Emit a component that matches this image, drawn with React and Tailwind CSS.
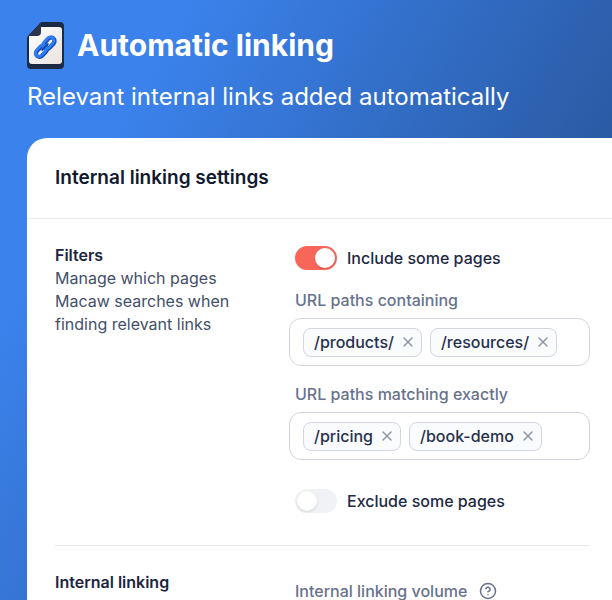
import React, { useState } from "react";
import { CircleHelp, X } from "lucide-react";

const LinkFileIcon = () => (
  <svg width="38" height="48" viewBox="0 0 38 48" aria-hidden="true">
    <defs>
      <linearGradient id="paper" x1="0" y1="0" x2="1" y2="1">
        <stop offset="0" stopColor="#ffffff" />
        <stop offset="1" stopColor="#e9e2e0" />
      </linearGradient>
    </defs>
    <path
      d="M15 1H33a4 4 0 0 1 4 4V44a4 4 0 0 1-4 4H4a4 4 0 0 1-4-4V17q0-1 1-2L13 2q1-1 2-1z"
      fill="#1d2a44"
    />
    <path
      d="M14 6H32a3 3 0 0 1 3 3V40a3 3 0 0 1-3 3H5a3 3 0 0 1-3-3V15z"
      fill="url(#paper)"
    />
    <path d="M14 2V11a4 4 0 0 1-4 4H1z" fill="#2b3550" />
    <g transform="translate(18 26) rotate(-47)" fill="none" strokeLinecap="round">
      <g stroke="#1450bd" strokeWidth="4">
        <rect x="-12" y="-3" width="13" height="7" rx="3.5" />
        <rect x="-1" y="-3" width="13" height="7" rx="3.5" />
      </g>
      <g stroke="#2f7df0" strokeWidth="3">
        <rect x="-12" y="-4" width="13" height="7" rx="3.5" />
        <rect x="-1" y="-4" width="13" height="7" rx="3.5" />
      </g>
      <path d="M-4 0H4" stroke="#1148ac" strokeWidth="2" />
    </g>
  </svg>
);

const Toggle = ({ label, checked, onChange }) => (
  <label className="flex items-center gap-2.5 text-base leading-6 font-medium text-[#1e2a45]">
    <input
      type="checkbox"
      role="switch"
      checked={checked}
      onChange={(e) => onChange(e.target.checked)}
      className="peer sr-only"
    />
    <span className="flex h-6 w-[42px] items-center rounded-full bg-[#f1f2f5] p-0.5 peer-checked:justify-end peer-checked:bg-[#f8665a]">
      <span className="size-5 rounded-full bg-white shadow"></span>
    </span>
    {label}
  </label>
);

const PathField = ({ id, label, initial }) => {
  const [paths, setPaths] = useState(initial);
  const [draft, setDraft] = useState("");

  const addPath = (e) => {
    if (e.key === "Enter" && draft.trim()) {
      setPaths([...paths, draft.trim()]);
      setDraft("");
    }
  };

  return (
    <div>
      <label
        htmlFor={id}
        className="block pl-1.5 text-base leading-6 font-medium text-[#68728c]"
      >
        {label}
      </label>
      <div className="mt-1.5 flex h-12 items-center gap-2 rounded-xl border border-[#d3d5df] px-[13px]">
        {paths.map((path) => (
          <span
            key={path}
            className="flex h-[29px] items-center gap-1.5 rounded-lg border border-[#d3d5df] bg-[#f9fbfd] pr-[5px] pl-2.5 text-base font-medium text-[#27314b]"
          >
            {path}
            <button
              type="button"
              aria-label={`Remove ${path}`}
              onClick={() => setPaths(paths.filter((p) => p !== path))}
              className="text-[#8d94a8]"
            >
              <X size={16} />
            </button>
          </span>
        ))}
        <input
          id={id}
          value={draft}
          onChange={(e) => setDraft(e.target.value)}
          onKeyDown={addPath}
          className="w-0 min-w-0 flex-1 outline-none"
        />
      </div>
    </div>
  );
};

const App = () => {
  const [include, setInclude] = useState(true);
  const [exclude, setExclude] = useState(false);

  return (
    <div className="flex h-screen flex-col overflow-hidden bg-linear-[120deg,#3b82ec_20%,#28569b_78%] pl-[27px] font-['Inter',sans-serif]">
      {/* Header */}
      <header className="pt-[21px] text-white">
        <div className="flex items-center gap-3">
          <LinkFileIcon />
          <h1 className="text-3xl leading-10 font-bold">Automatic linking</h1>
        </div>
        <p className="mt-3 text-2xl leading-8 font-normal">
          Relevant internal links added automatically
        </p>
      </header>

      {/* Settings panel */}
      <main className="mt-[25px] flex-1 shrink-0 rounded-tl-[20px] bg-white">
        <div className="border-b border-[#e9eaed] px-7 py-7">
          <h2 className="text-[19px] leading-6 font-semibold text-[#111a2e]">
            Internal linking settings
          </h2>
        </div>

        <div className="mr-[22px] ml-7">
          <section className="flex gap-8 border-b border-[#e9eaed] pt-6 pb-8">
            <div className="w-[202px] text-base text-[#444f68]">
              <h3 className="leading-6 font-semibold text-[#1b2540]">Filters</h3>
              <p className="leading-[23px]">
                Manage which pages Macaw searches when finding relevant links
              </p>
            </div>
            <div className="flex-1 pt-[3px]">
              <div className="pl-1.5">
                <Toggle
                  label="Include some pages"
                  checked={include}
                  onChange={setInclude}
                />
              </div>
              <div className="mt-[18px] flex flex-col gap-4">
                <PathField
                  id="containing"
                  label="URL paths containing"
                  initial={["/products/", "/resources/"]}
                />
                <PathField
                  id="matching"
                  label="URL paths matching exactly"
                  initial={["/pricing", "/book-demo"]}
                />
              </div>
              <div className="mt-[29px] pl-1.5">
                <Toggle
                  label="Exclude some pages"
                  checked={exclude}
                  onChange={setExclude}
                />
              </div>
            </div>
          </section>

          <section className="flex gap-8 pt-6">
            <h3 className="w-[202px] text-base leading-6 font-semibold text-[#1b2540]">
              Internal linking
            </h3>
            <div className="flex flex-1 items-center gap-3 pt-3 pl-1.5 text-base leading-4 font-medium text-[#68728c]">
              Internal linking volume
              <button type="button" aria-label="About linking volume">
                <CircleHelp size={18} strokeWidth={2} />
              </button>
            </div>
          </section>
        </div>
      </main>
    </div>
  );
};

export default App;
